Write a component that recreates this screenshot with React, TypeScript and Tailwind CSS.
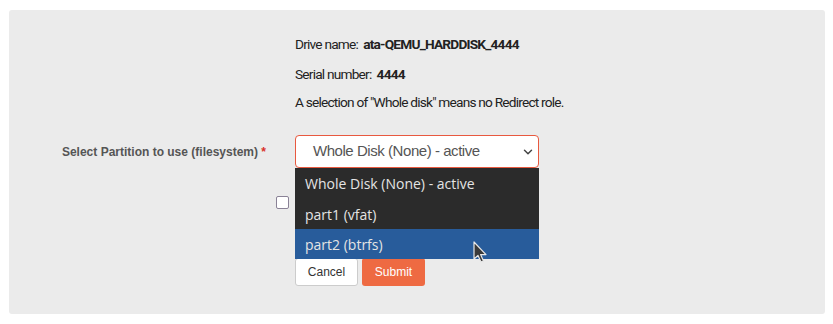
import { ChevronDown } from 'lucide-react';

const options = ['Whole Disk (None) - active', 'part1 (vfat)', 'part2 (btrfs)'];

function Cursor() {
    return (
        <svg className="absolute left-[178px] top-[12px]" width="16" height="24" viewBox="0 0 16 24">
            <path d="M1 1 L1 18 L5 14.5 L8 21 L10.5 20 L7.6 13.6 L13 13.6 Z" fill="#3a3a3a" stroke="#e8e8e8" strokeWidth="1.2" strokeLinejoin="round" />
        </svg>
    );
}

export default function App() {
    return (
        <div className="bg-white p-[9px] pt-[10px] w-[833px] h-[324px]">
            <div className="bg-[#ebebeb] rounded-[3px] w-[816px] h-[304px] pt-[24px]">
                <div className="ml-[286px] text-[13.7px] text-[#222] tracking-[-0.058em] leading-[20px] font-['Roboto',sans-serif]">
                    <div>
                        Drive name: &nbsp;<span className="font-bold">ata-QEMU_HARDDISK_4444</span>
                    </div>
                    <div className="mt-[10px]">
                        Serial number: &nbsp;<span className="font-bold">4444</span>
                    </div>
                    <div className="mt-[8px]">A selection of "Whole disk" means no Redirect role.</div>
                </div>

                <div className="flex items-center mt-[23px]">
                    <label className="w-[257px] text-right text-[12px] font-bold text-[#555] font-['Liberation_Sans',Arial,sans-serif]">
                        Select Partition to use (filesystem) <span className="text-[#d9312a]">*</span>
                    </label>
                    <div className="relative ml-[29px]">
                        <div className="w-[244px] h-[33px] bg-white border border-[#e8593f] rounded-[4px] flex items-center pl-[17px] pr-[3px] text-[15px] tracking-[-0.03em] text-[#555] font-['Liberation_Sans',Arial,sans-serif]">
                            <span className="flex-1">Whole Disk (None) - active</span>
                            <ChevronDown className="w-[14px] h-[14px] text-[#444]" strokeWidth={2.5} />
                        </div>
                        <div className="absolute left-0 top-[33px] w-[244px] bg-[#2b2b2b] z-10 font-['Open_Sans',sans-serif] text-[14px] text-[#e4e4e4]">
                            <div className="h-[31px] flex items-center pl-[10px]">{options[0]}</div>
                            <div className="h-[30px] flex items-center pl-[10px]">{options[1]}</div>
                            <div className="relative h-[30px] flex items-center pl-[10px] bg-[#285c9b]">
                                {options[2]}
                                <Cursor />
                            </div>
                        </div>
                    </div>
                </div>

                <div className="flex items-center mt-[26px] ml-[267px] h-[16px]">
                    <input type="checkbox" className="w-[13px] h-[13px] appearance-none border-[1.5px] border-[#8a8296] rounded-[2px] bg-white" />
                </div>

                <div className="flex gap-[4px] ml-[286px] mt-[48px] font-['Liberation_Sans',Arial,sans-serif] text-[12px]">
                    <button className="w-[63px] h-[28px] bg-white border border-[#ccc] rounded-[3px] text-[#333]">Cancel</button>
                    <button className="w-[63px] h-[28px] bg-[#ee6a42] rounded-[3px] text-white">Submit</button>
                </div>
            </div>
        </div>
    );
}
